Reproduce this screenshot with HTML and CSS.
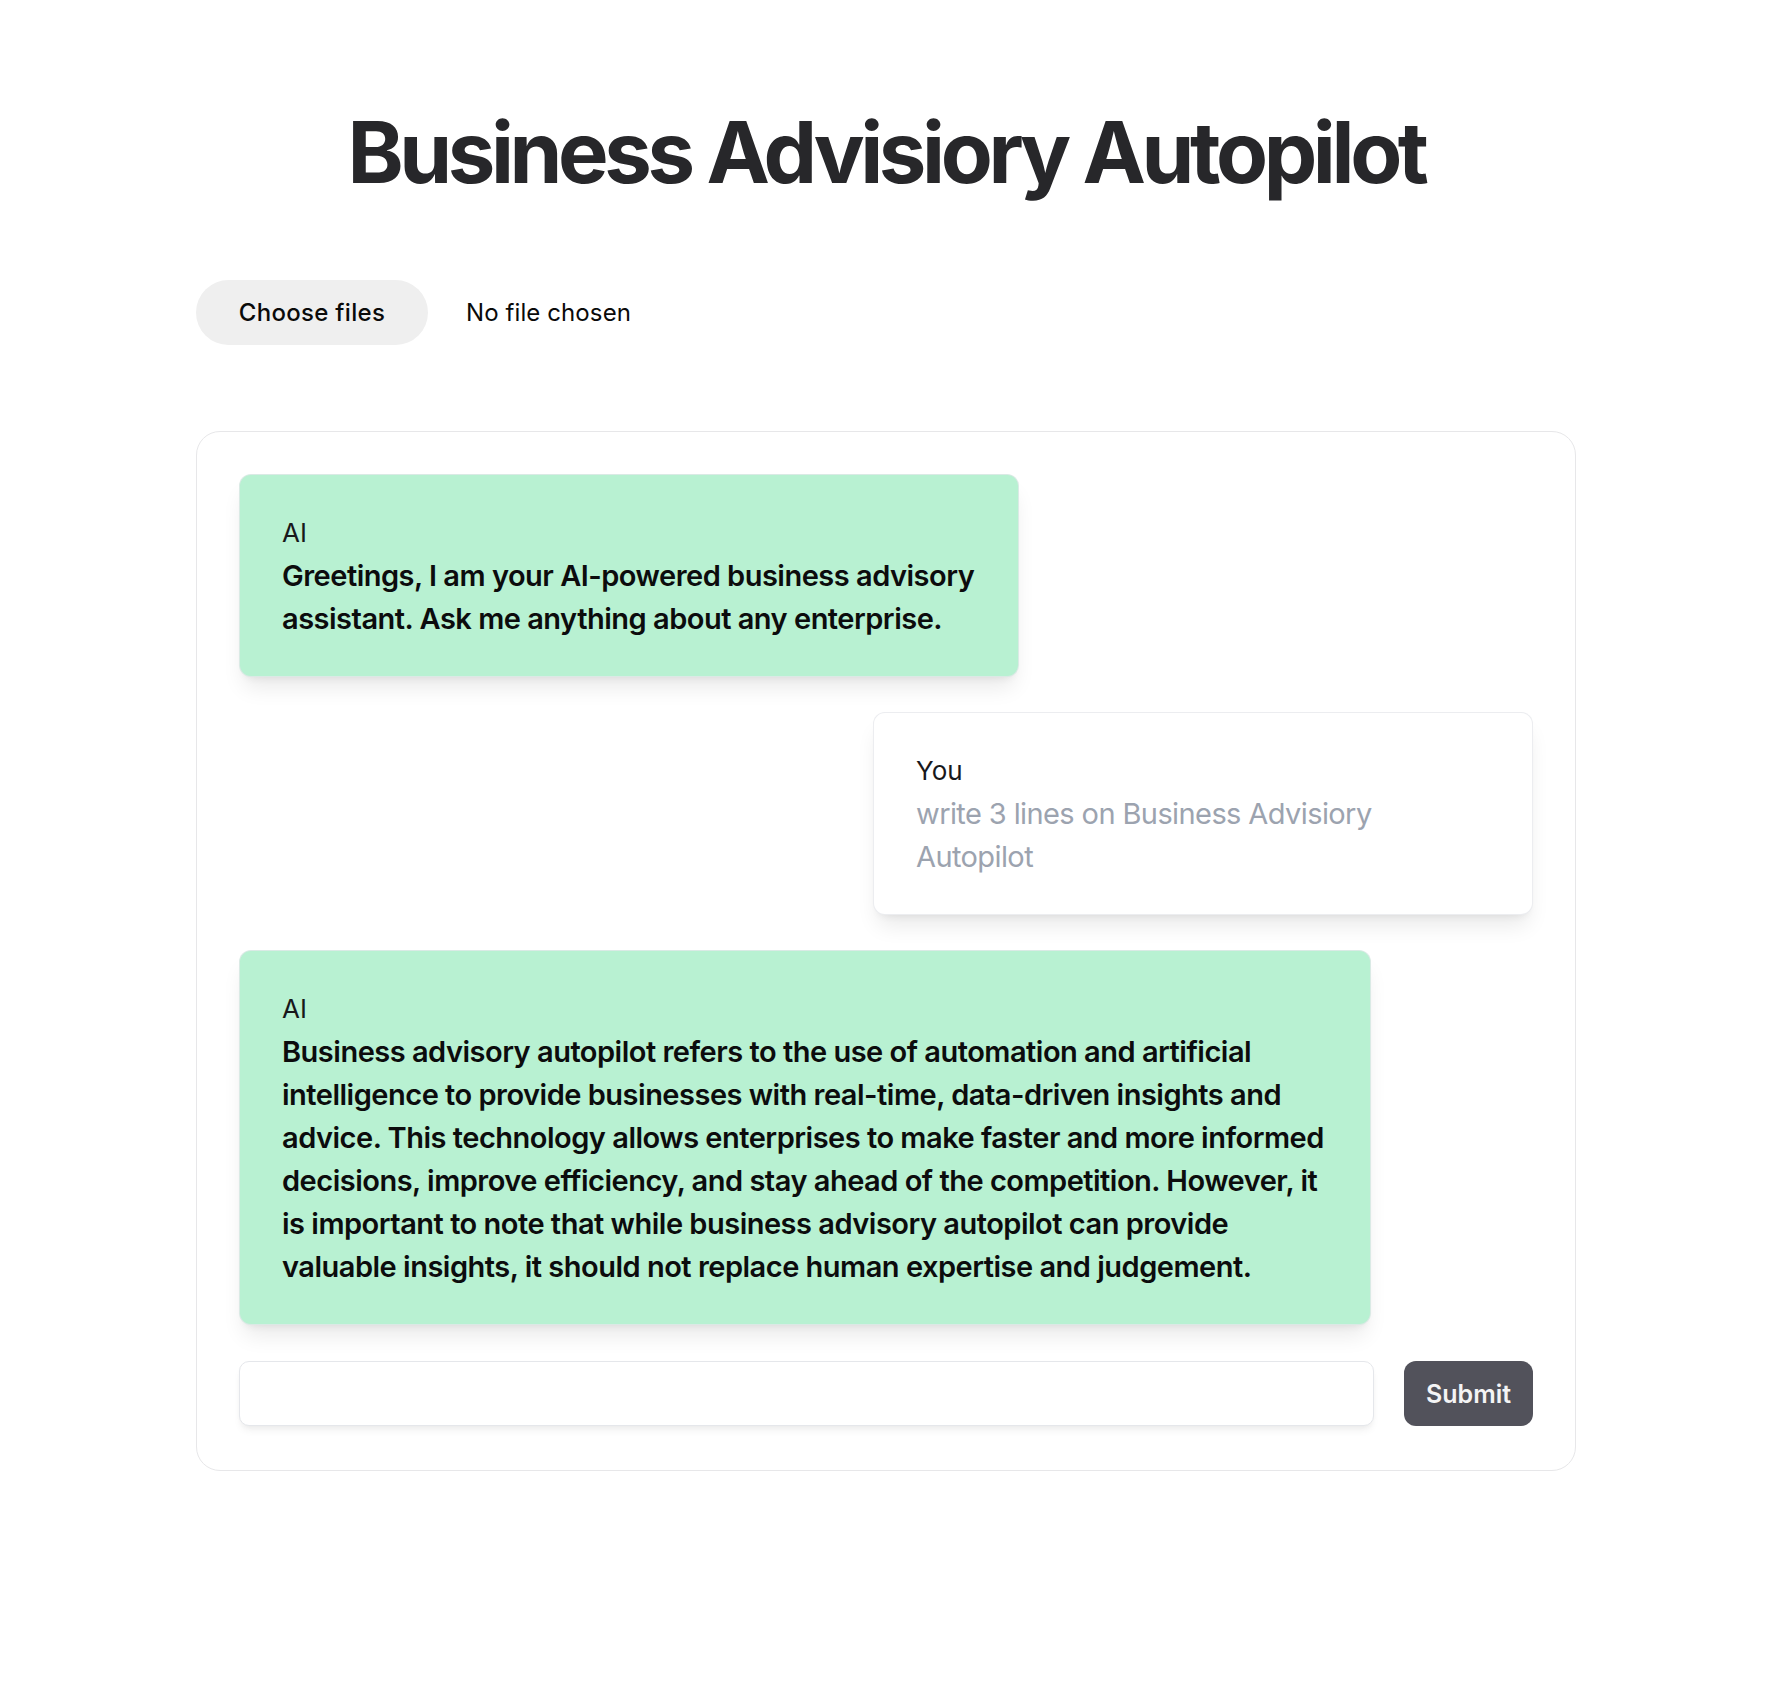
FILE: index.html
```html
<!DOCTYPE html>
<html lang="en">
<head>
<meta charset="utf-8">
<title>Business Advisiory Autopilot</title>
<link rel="stylesheet" href="styles.css">
</head>
<body>
<main class="page">
  <h1 class="title">Business Advisiory Autopilot</h1>
  <div class="file-row">
    <button class="file-btn" type="button">Choose files</button>
    <span class="file-status">No file chosen</span>
  </div>
  <section class="chat">
    <div class="msg msg-ai msg-short">
      <div class="msg-author">AI</div>
      <div class="msg-text">Greetings, I am your AI-powered business advisory assistant. Ask me anything about any enterprise.</div>
    </div>
    <div class="msg msg-user">
      <div class="msg-author">You</div>
      <div class="msg-text">write 3 lines on Business Advisiory Autopilot</div>
    </div>
    <div class="msg msg-ai msg-long">
      <div class="msg-author">AI</div>
      <div class="msg-text">Business advisory autopilot refers to the use of automation and artificial intelligence to provide businesses with real-time, data-driven insights and advice. This technology allows enterprises to make faster and more informed decisions, improve efficiency, and stay ahead of the competition. However, it is important to note that while business advisory autopilot can provide valuable insights, it should not replace human expertise and judgement.</div>
    </div>
    <form class="composer" onsubmit="return false">
      <input class="composer-input" type="text" aria-label="Message">
      <button class="composer-submit" type="submit">Submit</button>
    </form>
  </section>
</main>
</body>
</html>
```
FILE: styles.css
```css
* { box-sizing: border-box; }

html, body {
  margin: 0;
  background: #ffffff;
}

body {
  font-family: Inter, "Noto Sans", "Liberation Sans", sans-serif;
  color: #18181b;
}

.page {
  width: 1380px;
  margin-left: 196px;
  padding-top: 110px;
  padding-bottom: 200px;
}

.title {
  margin: 0;
  font-size: 85px;
  line-height: 85px;
  font-weight: 700;
  letter-spacing: -4.4px;
  color: #27272a;
  text-align: center;
}

.file-row {
  display: flex;
  align-items: center;
  gap: 38px;
  margin-top: 85px;
}

.file-btn {
  width: 232px;
  height: 65px;
  border: none;
  border-radius: 33px;
  background: #efefef;
  font-family: inherit;
  font-size: 24px;
  font-weight: 500;
  letter-spacing: 0.3px;
  color: #0a0a0a;
  padding: 0;
}

.file-status {
  font-size: 24px;
  font-weight: 400;
  letter-spacing: 0.1px;
  color: #0a0a0a;
}

.chat {
  margin-top: 86px;
  border: 1px solid #e7e7e9;
  border-radius: 24px;
  padding: 42px 42px 44px;
  display: flex;
  flex-direction: column;
  gap: 35px;
}

.msg {
  border: 1px solid rgba(229, 231, 235, 0.75);
  border-radius: 12px;
  padding: 36px 42px;
  box-shadow: 0 15px 22px -5px rgba(0, 0, 0, 0.09), 0 6px 9px -6px rgba(0, 0, 0, 0.09);
}

.msg-ai {
  background: #b8f1d2;
  align-self: flex-start;
}

.msg-short { width: 780px; }
.msg-long { width: 1132px; }

.msg-user {
  background: #ffffff;
  align-self: flex-end;
  width: 660px;
}

.msg-author {
  font-size: 26px;
  line-height: 43px;
  font-weight: 400;
  color: #18181b;
}

.msg-text {
  font-size: 29px;
  line-height: 43px;
  letter-spacing: -0.5px;
}

.msg-ai .msg-text {
  font-weight: 600;
  color: #0c0c0d;
}

.msg-user .msg-text {
  font-weight: 400;
  letter-spacing: -0.6px;
  color: #9ca3af;
}

.composer {
  display: flex;
  gap: 30px;
  margin: 1px 0 0;
}

.composer-input {
  flex: 1;
  height: 65px;
  border: 1px solid #e5e7eb;
  border-radius: 10px;
  background: #ffffff;
  box-shadow: 0 6px 9px -2px rgba(0, 0, 0, 0.06), 0 3px 6px -3px rgba(0, 0, 0, 0.06);
  font-family: inherit;
  font-size: 24px;
  padding: 0 18px;
  outline: none;
}

.composer-submit {
  width: 129px;
  height: 65px;
  border: none;
  border-radius: 12px;
  background: #52525b;
  color: #f4f4f5;
  font-family: inherit;
  font-size: 25px;
  font-weight: 600;
  padding: 0;
}
```
